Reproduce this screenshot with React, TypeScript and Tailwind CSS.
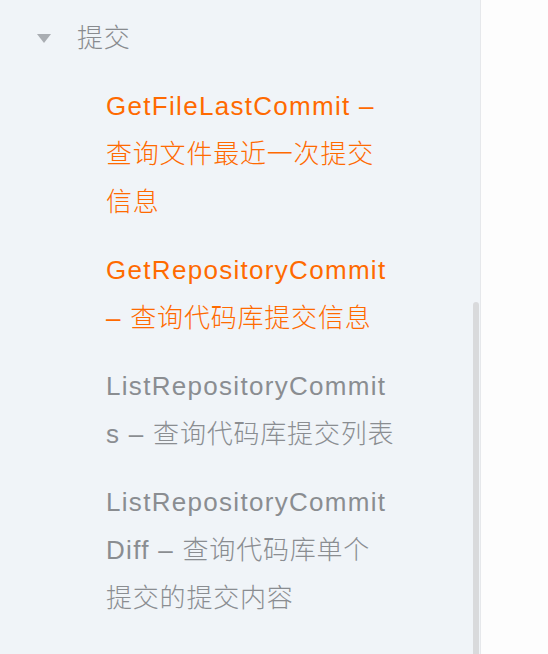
import React from "react";

type Item = { lines: string[]; active?: boolean };

const ITEMS: Item[] = [
  { lines: ["GetFileLastCommit –", "查询文件最近一次提交", "信息"], active: true },
  { lines: ["GetRepositoryCommit", "– 查询代码库提交信息"], active: true },
  { lines: ["ListRepositoryCommit", "s – 查询代码库提交列表"] },
  { lines: ["ListRepositoryCommit", "Diff – 查询代码库单个", "提交的提交内容"] },
];

// latin runs get wider tracking than the CJK ones
function Line({ text }: { text: string }) {
  const parts = text.split(/([\u4e00-\u9fff]+)/).filter(Boolean);
  return (
    <span className="block whitespace-nowrap">
      {parts.map((p, i) =>
        /[\u4e00-\u9fff]/.test(p) ? (
          <span key={i} className="tracking-[0.8px]">{p}</span>
        ) : (
          <span key={i} className="tracking-[1.3px]">{p}</span>
        )
      )}
    </span>
  );
}

export default function App() {
  return (
    <div
      className="flex h-[654px] w-[548px] overflow-hidden bg-[#fdfdfd]"
      style={{ fontFamily: '"Liberation Sans", "Noto Sans CJK SC", sans-serif' }}
    >
      <aside className="relative w-[481px] shrink-0 border-r border-[#e6e8eb] bg-[#f0f4f8]">
        <div className="mt-[14px] flex h-12 items-center">
          <span className="ml-[37px] h-0 w-0 border-x-[7px] border-t-[9px] border-x-transparent border-t-[#a9adb2]" />
          <span className="ml-[26px] text-[26px] font-light leading-[48px] tracking-[0.8px] text-[#888b8f]">
            提交
          </span>
        </div>
        <ul className="mt-5 flex flex-col gap-5 pl-[106px]">
          {ITEMS.map((it) => (
            <li
              key={it.lines[0] + it.lines[1]}
              className={`text-[26px] font-light leading-[48px] ${
                it.active ? "text-[#ff6a00]" : "text-[#8a8d91]"
              }`}
            >
              {it.lines.map((l) => (
                <Line key={l} text={l} />
              ))}
            </li>
          ))}
        </ul>
        <div className="absolute bottom-0 right-[1px] top-[302px] w-[6px] rounded-t-[3px] bg-[#d9dadc]" />
      </aside>
      <div className="flex-1" />
    </div>
  );
}
